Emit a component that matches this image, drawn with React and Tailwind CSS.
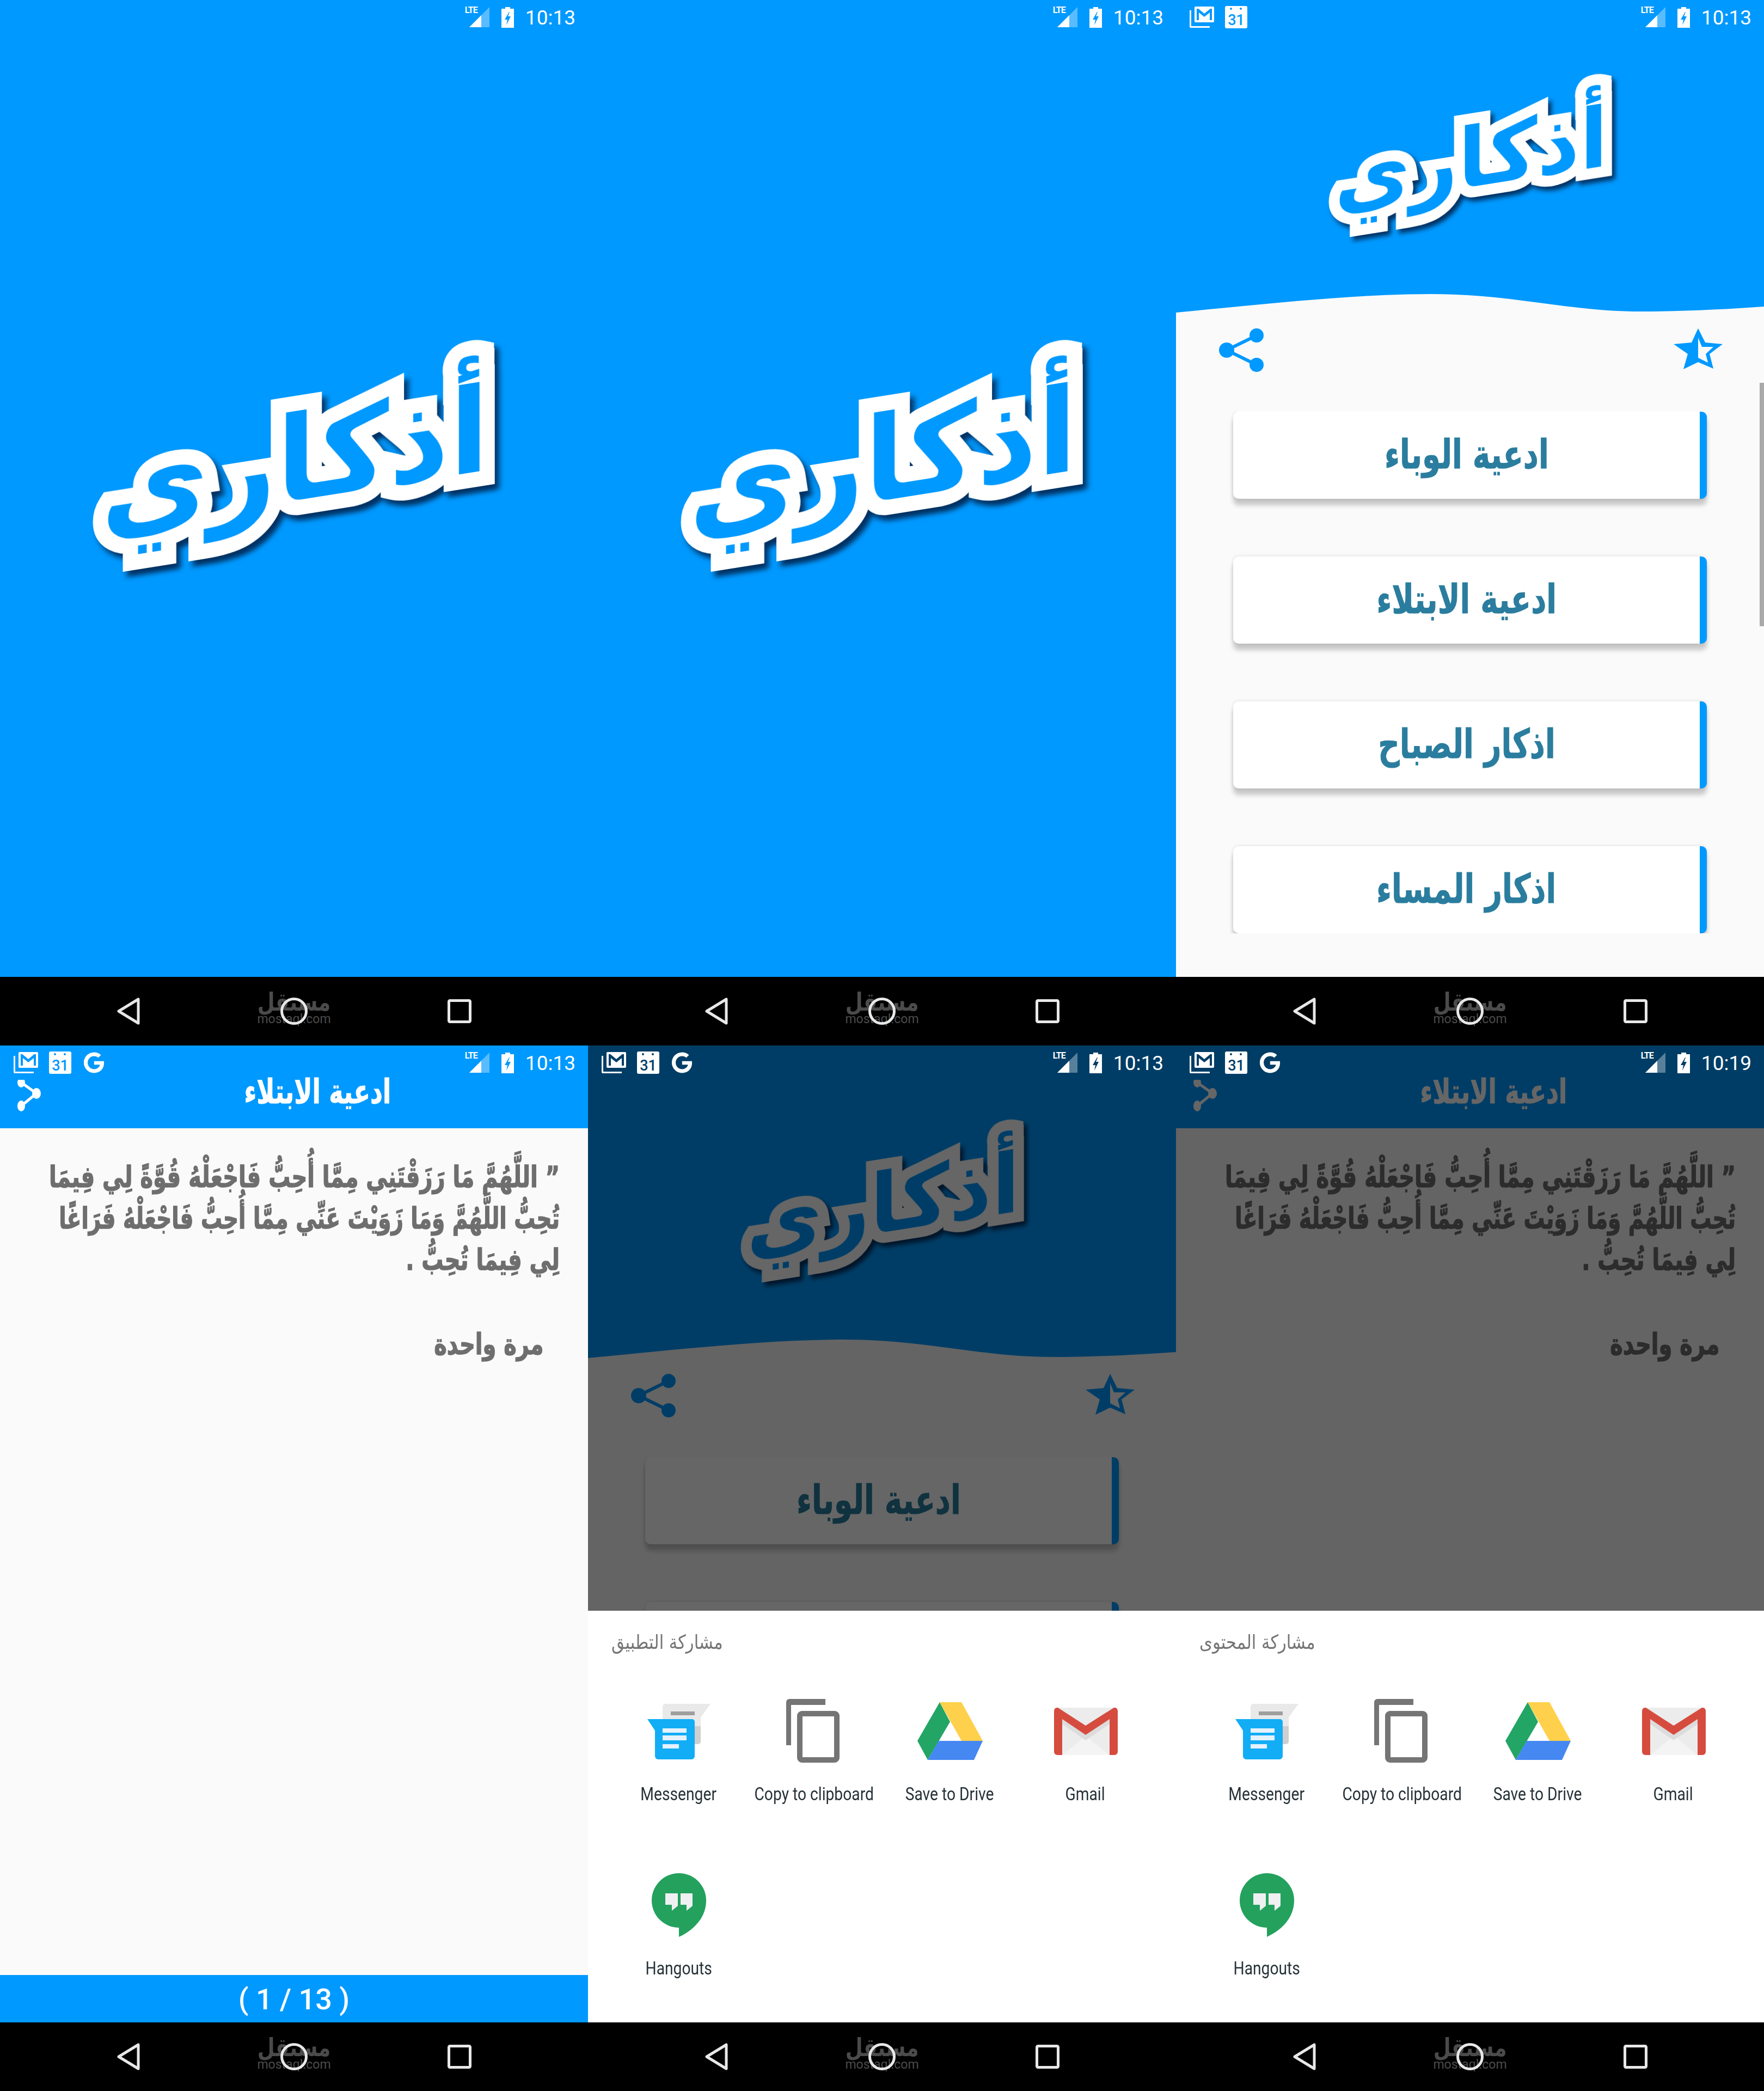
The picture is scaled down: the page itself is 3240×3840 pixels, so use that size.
import React from "react";
import { FaGoogle } from "react-icons/fa";

const roboto = "[font-family:Roboto,sans-serif]";

function Gmail() {
  return (
    <svg width="45" height="39" viewBox="0 0 45 39" fill="white">
      <path fillRule="evenodd" d="M11 0H43a2 2 0 0 1 2 2V27a2 2 0 0 1-2 2H11a2 2 0 0 1-2-2V2a2 2 0 0 1 2-2ZM13 4V25H17V11L27 19L37 11V25H41V4H38L27 13L16 4Z" />
      <path d="M0 7H3V36H37V39H2a2 2 0 0 1-2-2Z" />
    </svg>
  );
}

function Calendar({ ink }) {
  return (
    <svg width="41" height="41" viewBox="0 0 41 41">
      <rect x="0" y="0" width="41" height="41" rx="3" fill="white" />
      <circle cx="11" cy="5" r="2" fill={ink} />
      <circle cx="29" cy="5" r="2" fill={ink} />
      <text x="20.5" y="35" textAnchor="middle" fontFamily="Roboto" fontWeight="500" fontSize="27" fill={ink}>31</text>
    </svg>
  );
}

function Signal() {
  return (
    <svg width="37" height="37" viewBox="0 0 37 37">
      <path d="M37 0V37H0Z" fill="white" fillOpacity="0.35" />
      <path d="M22 15V37H0Z" fill="white" />
    </svg>
  );
}

function Battery() {
  return (
    <svg width="23" height="38" viewBox="0 0 23 38" fill="white">
      <path fillRule="evenodd" d="M7 0H16V3H23V38H0V3H7ZM14 9L6 23H11L9 33L17 17H12L15 9Z" />
    </svg>
  );
}

function Status({ left = false, time = "10:13", ink = "#0099ff", hide = false }) {
  return (
    <div className={`h-[63px] flex items-center justify-between pl-[25px] pr-[23px] ${hide ? "invisible" : ""}`}>
      <div className="flex items-center gap-[20px]">
        {left ? <Gmail /> : null}
        {left ? <Calendar ink={ink} /> : null}
        {left === "g" ? <FaGoogle className="text-white ml-[2px]" size={39} /> : null}
      </div>
      <div className="flex items-center">
        <div className="relative w-[45px] h-[37px]">
          <span className={`absolute left-0 -top-[3px] text-white ${roboto} font-bold text-[16px] leading-[18px] tracking-[-1px]`}>LTE</span>
          <div className="absolute left-[8px] top-0"><Signal /></div>
        </div>
        <div className="ml-[22px]"><Battery /></div>
        <span className={`ml-[21px] mt-[2px] text-white ${roboto} text-[37px] leading-none`}>{time}</span>
      </div>
    </div>
  );
}

function Nav() {
  return (
    <div className="relative h-[126px] bg-black flex items-center justify-between pl-[215px] pr-[214px]">
      <div className="absolute left-[475px] top-[26px] w-[130px] flex flex-col items-center text-[#4b4b4b]">
        <span className="font-bold text-[46px] leading-[40px] scale-x-[.8]" dir="rtl">مستقل</span>
        <span className={`${roboto} text-[23px] leading-[24px]`}>mostaql.com</span>
      </div>
      <svg width="42" height="50" viewBox="0 0 42 50" className="relative" fill="none" stroke="#e8e8e8" strokeWidth="5" strokeLinejoin="round">
        <path d="M39 3V47L3 25Z" />
      </svg>
      <svg width="50" height="50" viewBox="0 0 50 50" className="relative" fill="none" stroke="#e8e8e8" strokeWidth="5">
        <circle cx="25" cy="25" r="22.5" />
      </svg>
      <svg width="44" height="44" viewBox="0 0 44 44" className="relative" fill="none" stroke="#e8e8e8" strokeWidth="5" strokeLinejoin="round">
        <rect x="2.5" y="2.5" width="39" height="39" rx="2" />
      </svg>
    </div>
  );
}

function Logo({ small }) {
  return small ? (
    <div dir="rtl" className="font-bold text-[152px] leading-none text-[#0099ff] [-webkit-text-stroke:40px_white] [paint-order:stroke_fill] -skew-y-[9deg] drop-shadow-[6px_8px_4px_rgba(0,30,70,0.85)] whitespace-nowrap">أذكاري</div>
  ) : (
    <div dir="rtl" className="font-bold text-[216px] leading-none text-[#0099ff] [-webkit-text-stroke:56px_white] [paint-order:stroke_fill] -skew-y-[9deg] drop-shadow-[8px_11px_5px_rgba(0,30,70,0.85)] whitespace-nowrap">أذكاري</div>
  );
}

function Splash() {
  return (
    <div className="h-full bg-[#0099ff] flex flex-col">
      <Status />
      <div className="flex-1 flex items-center justify-center pb-[168px] pl-[4px]"><Logo /></div>
    </div>
  );
}

function ShareBlue() {
  return (
    <svg width="83" height="80" viewBox="0 0 83 80" fill="#0099ff" stroke="#0099ff">
      <path d="M69 13L14 40L69 67" fill="none" strokeWidth="6" />
      <circle cx="69" cy="13" r="13" stroke="none" />
      <circle cx="14" cy="40" r="14" stroke="none" />
      <circle cx="69" cy="67" r="13" stroke="none" />
    </svg>
  );
}

function Star() {
  return (
    <svg width="90" height="75" viewBox="0 0 90 75">
      <path d="M45 0L58 26L90 29L66 47L73 74L45 62L18 75L26 47L0 29L33 26Z" fill="#0099ff" />
      <path d="M45 17L52 34L73 34L59 47L63 63L45 54Z" fill="#fafafa" />
    </svg>
  );
}

function MenuButton({ children }) {
  return (
    <div className="h-[160px] shrink-0 mx-[105px] bg-white rounded-[10px] border-r-[13px] border-[#0099ff] shadow-[0_12px_8px_rgba(0,0,0,0.2),0_0_6px_rgba(0,0,0,0.12)] flex items-center justify-center pb-[4px]">
      <span dir="rtl" className="font-bold text-[#2a7d9e] text-[74px] leading-none scale-x-[.74] [-webkit-text-stroke:1px_#2a7d9e] whitespace-nowrap">{children}</span>
    </div>
  );
}

function Menu({ left, hideStatus, scrollbar = false }) {
  return (
    <div className="relative h-full bg-[#fafafa] flex flex-col">
      <div className="bg-[#0099ff] h-[540px] flex flex-col">
        <Status left={left} hide={hideStatus} />
        <div className="flex-1 flex items-center justify-center pb-[22px] pl-[4px]"><Logo small /></div>
      </div>
      <svg width="1080" height="36" viewBox="0 0 1080 36" className="block">
        <path d="M0 34C150 20 320 0 468 0C620 0 720 32 854 32C930 32 1010 28 1080 23V0H0Z" fill="#0099ff" />
      </svg>
      <div className="flex justify-between items-start mt-[27px] pl-[79px] pr-[76px]">
        <ShareBlue />
        <Star />
      </div>
      <div className="mt-[73px] h-[958px] overflow-hidden flex flex-col gap-[106px]">
        <MenuButton>ادعية الوباء</MenuButton>
        <MenuButton>ادعية الابتلاء</MenuButton>
        <MenuButton>اذكار الصباح</MenuButton>
        <MenuButton>اذكار المساء</MenuButton>
      </div>
      {scrollbar ? <div className="absolute right-0 top-[703px] w-[8px] h-[447px] bg-[#a9a9a9]" /> : null}
    </div>
  );
}

function ToolShare() {
  return (
    <svg width="45" height="58" viewBox="0 0 45 58" fill="white" stroke="white" className="ml-[32px] shrink-0">
      <path d="M7 5L35 25L7 48" fill="none" strokeWidth="5" />
      <ellipse cx="7" cy="5" rx="7" ry="9" stroke="none" />
      <ellipse cx="35" cy="25" rx="8" ry="10" stroke="none" />
      <ellipse cx="7" cy="48" rx="7" ry="10" stroke="none" />
    </svg>
  );
}

function Reader({ hideStatus, time }) {
  const base = "whitespace-nowrap origin-right [-webkit-text-stroke:1.5px_#6e6e6e]";
  return (
    <div className="h-full bg-[#fafafa] flex flex-col">
      <div className="bg-[#0099ff] h-[152px]">
        <Status left="g" time={time} hide={hideStatus} />
        <div className="relative flex">
          <ToolShare />
          <div dir="rtl" className="absolute left-[449px] top-[-8px] w-[268px] flex justify-center text-white font-bold text-[62px] leading-[60px] whitespace-nowrap [-webkit-text-stroke:1px_white]"><span className="scale-x-[.72]">ادعية الابتلاء</span></div>
        </div>
      </div>
      <div dir="rtl" className="flex-1 pt-[52px] pr-[52px] text-[#6e6e6e] font-bold text-[54px] leading-[76px]">
        <div className={`${base} scale-x-[.74]`}>” اللَّهُمَّ مَا رَزَقْتَنِي مِمَّا أُحِبُّ فَاجْعَلْهُ قُوَّةً لِي فِيمَا</div>
        <div className={`${base} scale-x-[.72]`}>تُحِبُّ اللَّهُمَّ وَمَا زَوَيْتَ عَنِّي مِمَّا أُحِبُّ فَاجْعَلْهُ فَرَاغًا</div>
        <div className={`${base} scale-x-[.74]`}>لِي فِيمَا تُحِبُّ .</div>
        <div className={`mt-[79px] pr-[40px] ${base} scale-x-[.74]`}>مرة واحدة</div>
      </div>
      <div className={`h-[87px] bg-[#0099ff] flex items-center justify-center text-white ${roboto} font-medium text-[54px] leading-none pt-[3px]`}>( 1 / 13 )</div>
    </div>
  );
}

function MessengerIcon() {
  return (
    <svg width="120" height="120" viewBox="0 0 120 120">
      <path d="M35 9H118L100 34V78a5 5 0 0 1-5 5H35a5 5 0 0 1-5-5V14a5 5 0 0 1 5-5Z" fill="#e9e9e9" />
      <path d="M89 50H100V78a5 5 0 0 1-5 5H89Z" fill="#cfcfcf" />
      <rect x="45" y="23" width="44" height="7" fill="#9e9e9e" />
      <path d="M2 37H84a5 5 0 0 1 5 5V105a6 6 0 0 1-6 6H22a6 6 0 0 1-6-6V58Z" fill="#12adf5" />
      <rect x="30" y="54" width="44" height="8" fill="#e3f2fd" />
      <rect x="30" y="67" width="44" height="9" fill="#e3f2fd" />
      <rect x="30" y="83" width="30" height="8" fill="#e3f2fd" />
    </svg>
  );
}

function CopyIcon() {
  return (
    <svg width="120" height="120" viewBox="0 0 120 120">
      <path d="M14 0H80V11H17V85H8V6a6 6 0 0 1 6-6Z" fill="#757575" />
      <rect x="33" y="27" width="68" height="85" rx="4" fill="#fff" stroke="#757575" strokeWidth="10" />
    </svg>
  );
}

function DriveIcon() {
  return (
    <svg width="120" height="120" viewBox="0 0 120 120">
      <path d="M41 6L0 77L19 112L60 42Z" fill="#23a565" />
      <path d="M41 6H81L120 77H81Z" fill="#ffd04b" />
      <path d="M39 77H120L104 112H19Z" fill="#4688f1" />
    </svg>
  );
}

function GmailIcon() {
  return (
    <svg width="120" height="120" viewBox="0 0 120 120">
      <rect x="2" y="16" width="117" height="87" rx="6" fill="#ececec" />
      <path d="M17 103L60 68L104 103Z" fill="#f4f4f4" />
      <path d="M17 37L60 66L104 37V46L60 76L17 46Z" fill="#dcdcdc" />
      <path d="M2 22a6 6 0 0 1 7-6L60 49L112 16a6 6 0 0 1 7 6V97a6 6 0 0 1-6 6H104V37L60 66L17 37V103H8a6 6 0 0 1-6-6Z" fill="#d54c3f" />
    </svg>
  );
}

function HangoutsIcon() {
  return (
    <svg width="120" height="120" viewBox="0 0 120 120">
      <path d="M60 0a50 50 0 0 1 50 50C110 84 84 106 60 117V100a50 50 0 0 1 0-100Z" fill="#23a15d" />
      <path d="M35 37H58V60L47 69V58H35ZM63 37H85V60L74 69V58H63Z" fill="#eef0f2" />
    </svg>
  );
}

function Sheet({ title }) {
  const items = [
    ["Messenger", <MessengerIcon />],
    ["Copy to clipboard", <CopyIcon />],
    ["Save to Drive", <DriveIcon />],
    ["Gmail", <GmailIcon />],
    ["Hangouts", <HangoutsIcon />],
  ];
  return (
    <div className="absolute inset-x-0 bottom-0 h-[756px] bg-white z-10">
      <div className="h-[162px] pl-[43px] pt-[38px]">
        <span dir="rtl" className="inline-block text-[#757575] text-[36px] leading-[40px] origin-left scale-x-[.85] whitespace-nowrap">{title}</span>
      </div>
      <div className="grid grid-cols-[repeat(4,249px)] auto-rows-[320px] pl-[42px]">
        {items.map(([label, icon]) => (
          <div key={label} className="flex flex-col items-center">
            <div className="h-[120px]">{icon}</div>
            <span className={`mt-[34px] ${roboto} text-[34px] leading-[40px] text-[#263238] whitespace-nowrap scale-x-[.83]`}>{label}</span>
          </div>
        ))}
      </div>
    </div>
  );
}

function Dim({ children, time, title }) {
  return (
    <div className="relative h-full">
      {children}
      <div className="absolute inset-0 bg-black/60" />
      <div className="absolute inset-x-0 top-0 z-20"><Status left="g" time={time} ink="#003d66" /></div>
      <Sheet title={title} />
    </div>
  );
}

function Phone({ children }) {
  return (
    <div className="w-[1080px] h-[1920px] flex flex-col overflow-hidden">
      <div className="h-[1794px] relative">{children}</div>
      <Nav />
    </div>
  );
}

export default function App() {
  return (
    <div className="w-[3240px] h-[3840px] grid grid-cols-[repeat(3,1080px)] grid-rows-[repeat(2,1920px)] [font-family:'DejaVu_Sans',sans-serif]">
      <Phone><Splash /></Phone>
      <Phone><Splash /></Phone>
      <Phone><Menu left scrollbar /></Phone>
      <Phone><Reader /></Phone>
      <Phone><Dim title="مشاركة التطبيق"><Menu hideStatus /></Dim></Phone>
      <Phone><Dim title="مشاركة المحتوى" time="10:19"><Reader hideStatus /></Dim></Phone>
    </div>
  );
}
